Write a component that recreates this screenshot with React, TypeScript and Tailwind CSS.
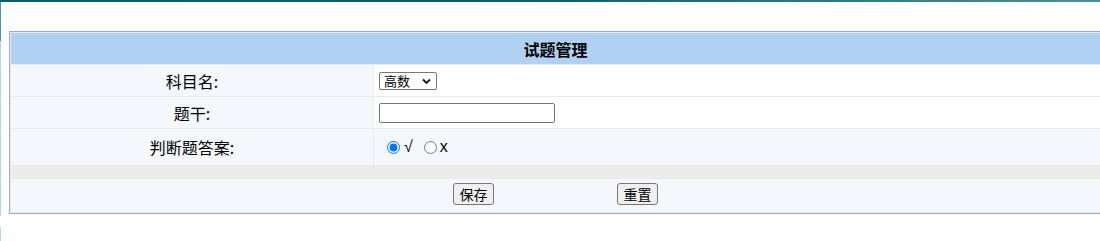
import { useState } from "react";

const font = { fontFamily: '"Noto Sans CJK SC", "Microsoft YaHei", sans-serif' };

function Row({
  label,
  children,
  h,
  valueBg = "bg-white",
}: {
  label: string;
  children: React.ReactNode;
  h: string;
  valueBg?: string;
}) {
  return (
    <div className={`flex gap-px ${h}`}>
      <div className="w-[362px] shrink-0 bg-[#f4f8fc] flex items-center justify-center text-[16px] text-black">
        {label}
      </div>
      <div className={`flex-1 flex items-center pl-[5px] ${valueBg}`}>{children}</div>
    </div>
  );
}

export default function App() {
  const [answer, setAnswer] = useState("yes");

  return (
    <div className="relative w-[1100px] h-[241px] bg-white overflow-hidden" style={font}>
      <div className="h-[2px] bg-gradient-to-r from-[#0c5d6b] via-[#0c5f6c] to-[#4a8f9c]" />
      <div className="absolute left-0 top-[2px] w-px h-[39px] bg-[#3d97c7]" />
      <div className="absolute left-0 top-[41px] w-px h-[175px] bg-[#b2d9e4]" />
      <div className="absolute left-0 top-[227px] w-px h-[14px] bg-[#b2d9e4]" />

      <div className="mt-[29px] ml-[9px] w-[1093px] border border-[#9aa8de] p-px bg-[#ebebeb] flex flex-col gap-px">
        <div className="h-[31px] bg-[#b0d1f2] flex items-center justify-center text-[16px] font-bold text-black">
          试题管理
        </div>
        <Row label="科目名:" h="h-[31px]">
          <div className="relative w-[58px] h-[18px]">
            <select
              className="block appearance-none w-full h-full py-0 pl-[4px] pr-[18px] border border-[#767676] rounded-[2px] bg-white text-[13px] leading-[16px] text-black"
              style={font}
              defaultValue="高数"
            >
              <option>高数</option>
              <option>线代</option>
            </select>
            <svg
              className="absolute right-[6px] top-[6px] pointer-events-none"
              width="9"
              height="7"
              viewBox="0 0 9 7"
            >
              <path d="M1 1.5 L4.5 5 L8 1.5" fill="none" stroke="#111" strokeWidth="1.8" />
            </svg>
          </div>
        </Row>
        <Row label="题干:" h="h-[31px]">
          <input
            type="text"
            className="block w-[176px] h-[20px] border border-[#767676] rounded-[2px] bg-white"
          />
        </Row>
        <Row label="判断题答案:" h="h-[36px]" valueBg="bg-[#f4f8fc]">
          <label className="flex items-center ml-[8px] text-[16px] text-black">
            <input
              type="radio"
              name="ans"
              checked={answer === "yes"}
              onChange={() => setAnswer("yes")}
              className="w-[13px] h-[13px] m-0 accent-[#0075ff]"
            />
            <span className="ml-[4px]" style={{ fontFamily: '"Liberation Sans", sans-serif' }}>
              √
            </span>
          </label>
          <label className="flex items-center ml-[11px] text-[16px] text-black">
            <input
              type="radio"
              name="ans"
              checked={answer === "no"}
              onChange={() => setAnswer("no")}
              className="w-[13px] h-[13px] m-0"
            />
            <span className="ml-[3px]" style={{ fontFamily: '"Liberation Sans", sans-serif' }}>
              x
            </span>
          </label>
        </Row>
        <div className="h-[12px] bg-[#ececec]" />
        <div className="h-[33px] bg-[#f4f8fc] flex items-start justify-center gap-[123px] pt-[4px]">
          <button
            type="button"
            className="block w-[41px] h-[22px] border border-[#767676] rounded-[3px] bg-[#efefef] text-[14px] leading-[18px] text-black"
            style={font}
          >
            保存
          </button>
          <button
            type="button"
            className="block w-[41px] h-[22px] border border-[#767676] rounded-[3px] bg-[#efefef] text-[14px] leading-[18px] text-black"
            style={font}
          >
            重置
          </button>
        </div>
      </div>
    </div>
  );
}
